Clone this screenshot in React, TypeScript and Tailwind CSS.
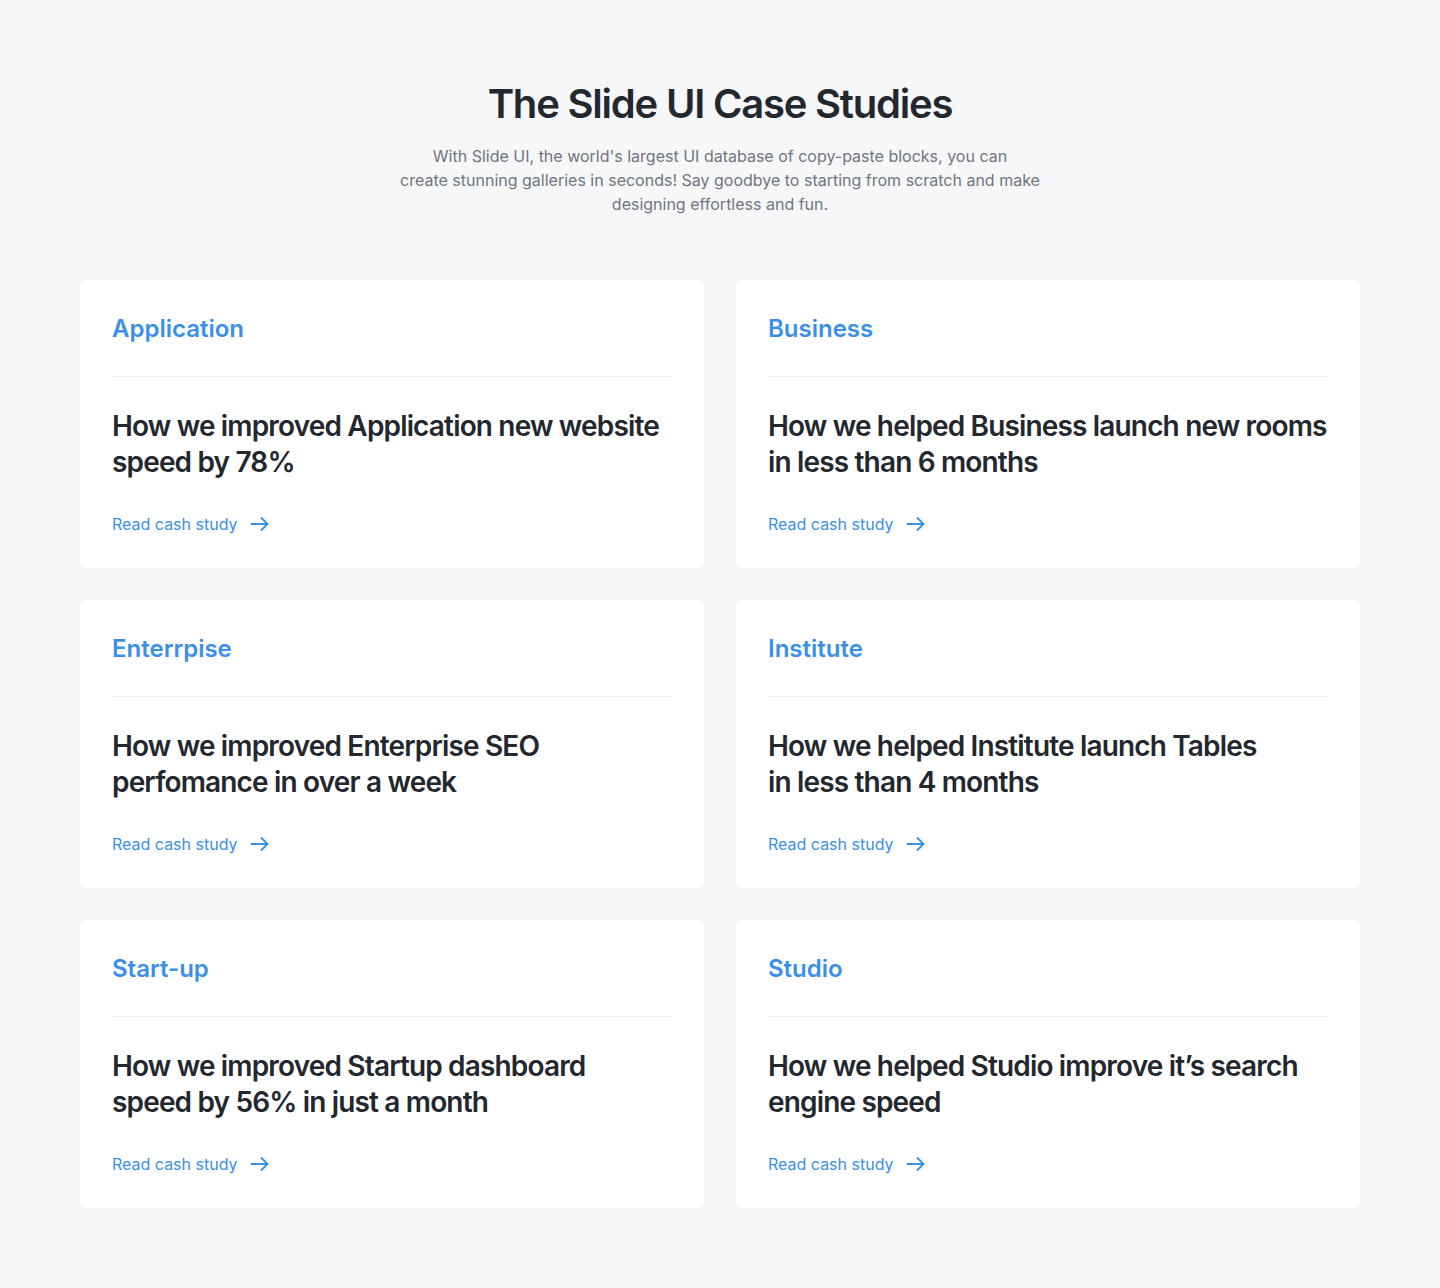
import React from "react";

const cards = [
  { cat: "Application", l1: "How we improved Application new website", l2: "speed by 78%" },
  { cat: "Business", l1: "How we helped Business launch new rooms", l2: "in less than 6 months" },
  { cat: "Enterrpise", l1: "How we improved Enterprise SEO", l2: "perfomance in over a week" },
  { cat: "Institute", l1: "How we helped Institute launch Tables", l2: "in less than 4 months" },
  { cat: "Start-up", l1: "How we improved Startup dashboard", l2: "speed by 56% in just a month" },
  { cat: "Studio", l1: "How we helped Studio improve it\u2019s search", l2: "engine speed" },
];

function Arrow() {
  return (
    <svg width="24" height="24" viewBox="0 0 24 24" fill="none" stroke="currentColor" strokeWidth="1.8" strokeLinecap="round" strokeLinejoin="round">
      <path d="M3.5 12h16" />
      <path d="m13.5 6 6 6-6 6" />
    </svg>
  );
}

export default function App() {
  return (
    <div className="min-h-[1288px] bg-[#f6f7f9] px-20 pt-20 pb-20" style={{ fontFamily: "Inter, 'Noto Sans', sans-serif" }}>
      <div className="flex flex-col items-center text-center">
        <h1 className="text-[40px] leading-[48px] font-semibold tracking-[-0.03em] text-[#23272e]">The Slide UI Case Studies</h1>
        <p className="mt-4 max-w-[700px] text-base leading-6 text-[#70757d]">
          With Slide UI, the world's largest UI database of copy-paste blocks, you can
          <br />
          create stunning galleries in seconds! Say goodbye to starting from scratch and make
          <br />
          designing effortless and fun.
        </p>
      </div>
      <div className="mt-16 grid grid-cols-2 gap-8">
        {cards.map((c) => (
          <div key={c.cat} className="rounded-lg bg-white px-8 pt-[34px] pb-8">
            <div className="text-2xl leading-[30px] font-semibold text-[#3b8fe8]">{c.cat}</div>
            <div className="mt-8 h-px bg-[#eceef1]" />
            <div className="mt-[31px] whitespace-nowrap text-[28px] leading-9 font-semibold tracking-[-0.03em] text-[#23272e]">
              {c.l1}
              <br />
              {c.l2}
            </div>
            <a className="mt-8 flex items-center gap-[10px] text-base leading-6 text-[#3b8fe8]">
              <span>Read cash study</span>
              <Arrow />
            </a>
          </div>
        ))}
      </div>
    </div>
  );
}
